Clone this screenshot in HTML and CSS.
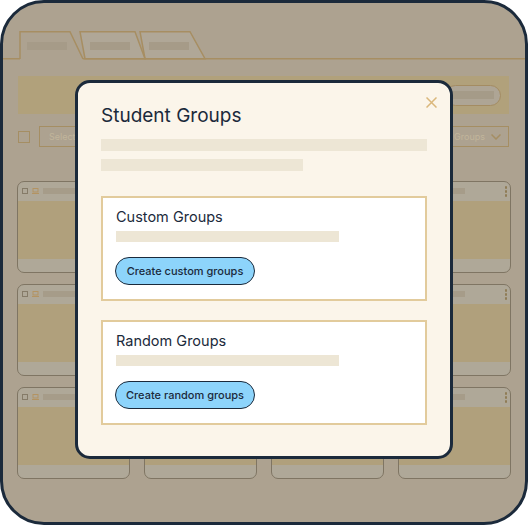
FILE: index.html
```html
<!DOCTYPE html>
<html lang="en">
<head>
    <meta charset="UTF-8">
    <meta name="viewport" content="width=device-width, initial-scale=1.0">
    <title>Student Groups</title>
    <link rel="stylesheet" href="styles.css">
</head>
<body>
    <div class="frame">
        <!-- tabs -->
        <svg class="tabs" width="522" height="29" viewBox="0 0 522 29">
            <path d="M137 0.75 H187 L202 27.75 H142 Z" fill="#b0a797" stroke="#a78e62" stroke-width="1.5"/>
            <path d="M77 0.75 H132 L142 27.75 H82 Z" fill="#b0a797" stroke="#a78e62" stroke-width="1.5"/>
            <path d="M17 28 V0.75 H67 L80 28" fill="#ada290" stroke="#a78e62" stroke-width="1.5"/>
            <path d="M0 27.75 H17 M80 27.75 H522" stroke="#a78e62" stroke-width="1.5"/>
            <rect x="24" y="11" width="40" height="8" fill="#a69b88"/>
            <rect x="87" y="11" width="40" height="8" fill="#a69b88"/>
            <rect x="146" y="11" width="40" height="8" fill="#a69b88"/>
        </svg>

        <div class="content">
            <div class="banner">
                <div class="pill"><span></span></div>
            </div>

            <div class="controls">
                <div class="left">
                    <span class="check"></span>
                    <div class="select">Select</div>
                </div>
                <div class="dropdown">
                    Groups
                    <svg width="10" height="6" viewBox="0 0 10 6"><path d="M0.5 0.5 L5 5 L9.5 0.5" fill="none" stroke="#a58e63" stroke-width="1.5"/></svg>
                </div>
            </div>

            <div class="cards" id="cards"></div>
        </div>

        <div class="modal">
            <svg class="close" width="11" height="11" viewBox="0 0 11 11"><path d="M0.5 0.5 L10.5 10.5 M10.5 0.5 L0.5 10.5" stroke="#dab77b" stroke-width="1.5"/></svg>
            <h2>Student Groups</h2>
            <div class="line"></div>
            <div class="line short"></div>

            <div class="option">
                <h3>Custom Groups</h3>
                <div class="line mid"></div>
                <button>Create custom groups</button>
            </div>

            <div class="option">
                <h3>Random Groups</h3>
                <div class="line mid"></div>
                <button>Create random groups</button>
            </div>
        </div>
    </div>

    <script>
        let cards = document.querySelector("#cards")
        for(let i = 0; i < 12; i++){
            let card = document.createElement("div")
            card.className = "card"
            card.innerHTML = `
                <div class="card-head">
                    <span class="box"></span>
                    <svg width="7" height="6" viewBox="0 0 7 6"><rect x="1" y="0.5" width="5" height="3.5" fill="none" stroke="#b39362"/><path d="M0 5.5 H7" stroke="#b39362"/></svg>
                    <span class="bar"></span>
                    <span class="dots"><i></i><i></i><i></i></span>
                </div>
                <div class="card-body"></div>
            `
            cards.appendChild(card)
        }
    </script>
</body>
</html>
```

FILE: styles.css
```css
*{
    margin: 0;
    padding: 0;
    box-sizing: border-box;
}
body{
    background-color: #fff;
    font-family: Inter, "Noto Sans", sans-serif;
    color: #1b2a3b;
}
.frame{
    position: relative;
    width: 528px;
    height: 525px;
    border: 3px solid #1b2a3b;
    border-radius: 44px;
    background-color: #ada290;
    padding-top: 28px;
    overflow: hidden;
}
.tabs{
    display: block;
}
.content{
    padding: 16px 15px 0 14px;
}
.banner{
    height: 38px;
    margin: 0 1px;
    background-color: #b1a17b;
    display: flex;
    justify-content: flex-end;
    align-items: center;
    padding-right: 8px;
}
.pill{
    width: 56px;
    height: 21px;
    border: 1.5px solid #a48c62;
    border-radius: 11px;
    background-color: #aea595;
    padding: 0 6px;
    display: flex;
    align-items: center;
}
.pill span{
    flex: 1;
    height: 8px;
    background-color: #a59b88;
}
.controls{
    margin-top: 12px;
    height: 21px;
    display: flex;
    justify-content: space-between;
    padding: 0 1px;
}
.left{
    display: flex;
    align-items: center;
    gap: 9px;
}
.check{
    width: 12px;
    height: 12px;
    border: 1.5px solid #a58e63;
}
.select, .dropdown{
    width: 130px;
    height: 21px;
    border: 1.5px solid #a58e63;
    font-size: 9px;
    color: #c1b59b;
    display: flex;
    align-items: center;
}
.select{
    padding-left: 9px;
}
.dropdown{
    justify-content: flex-end;
    gap: 6px;
    padding-right: 7px;
}
.cards{
    margin-top: 34px;
    display: grid;
    grid-template-columns: repeat(4, 113px);
    column-gap: 14px;
    row-gap: 11px;
}
.card{
    height: 92px;
    border: 1.5px solid #7f7563;
    border-radius: 7px;
    overflow: hidden;
    background-color: #afa898;
}
.card-head{
    height: 18.5px;
    display: flex;
    align-items: center;
    gap: 4px;
    padding: 0 3px 0 3.5px;
}
.card-head .box{
    width: 6px;
    height: 6px;
    border: 1px solid #857b68;
}
.card-head .bar{
    width: 41px;
    height: 6px;
    background-color: #a69c89;
}
.dots{
    margin-left: auto;
    display: flex;
    flex-direction: column;
    gap: 1.5px;
}
.dots i{
    width: 2.5px;
    height: 2.5px;
    border-radius: 50%;
    background-color: #8f7c56;
}
.card-body{
    height: 58px;
    background-color: #b0a07c;
}
.modal{
    position: absolute;
    top: 77px;
    left: 72px;
    width: 378px;
    height: 379px;
    border: 3px solid #1b2a3b;
    border-radius: 15px;
    background-color: #fbf5ea;
    padding: 21px 23px 0 23px;
}
.close{
    position: absolute;
    top: 14px;
    right: 13px;
}
h2{
    font-size: 19px;
    line-height: 24px;
    font-weight: 400;
    margin-bottom: 11px;
}
.line{
    height: 12px;
    background-color: #ede6d5;
}
.line.short{
    width: 202px;
    margin-top: 8px;
}
.option{
    margin-top: 25px;
    border: 2px solid #e2cb9c;
    background-color: #fff;
    padding: 9px 13px 14px;
}
.option + .option{
    margin-top: 19px;
}
h3{
    font-size: 14.5px;
    line-height: 20px;
    font-weight: 400;
}
.line.mid{
    width: 223px;
    height: 11px;
    margin-top: 4px;
}
button{
    display: block;
    margin-top: 15px;
    width: 140px;
    height: 28px;
    margin-left: -1px;
    border: 1.5px solid #1b2a3b;
    border-radius: 14px;
    background-color: #8dd4fb;
    font-family: Inter, "Noto Sans", sans-serif;
    font-size: 11px;
    font-weight: 500;
    color: #1b2a3b;
}
```
